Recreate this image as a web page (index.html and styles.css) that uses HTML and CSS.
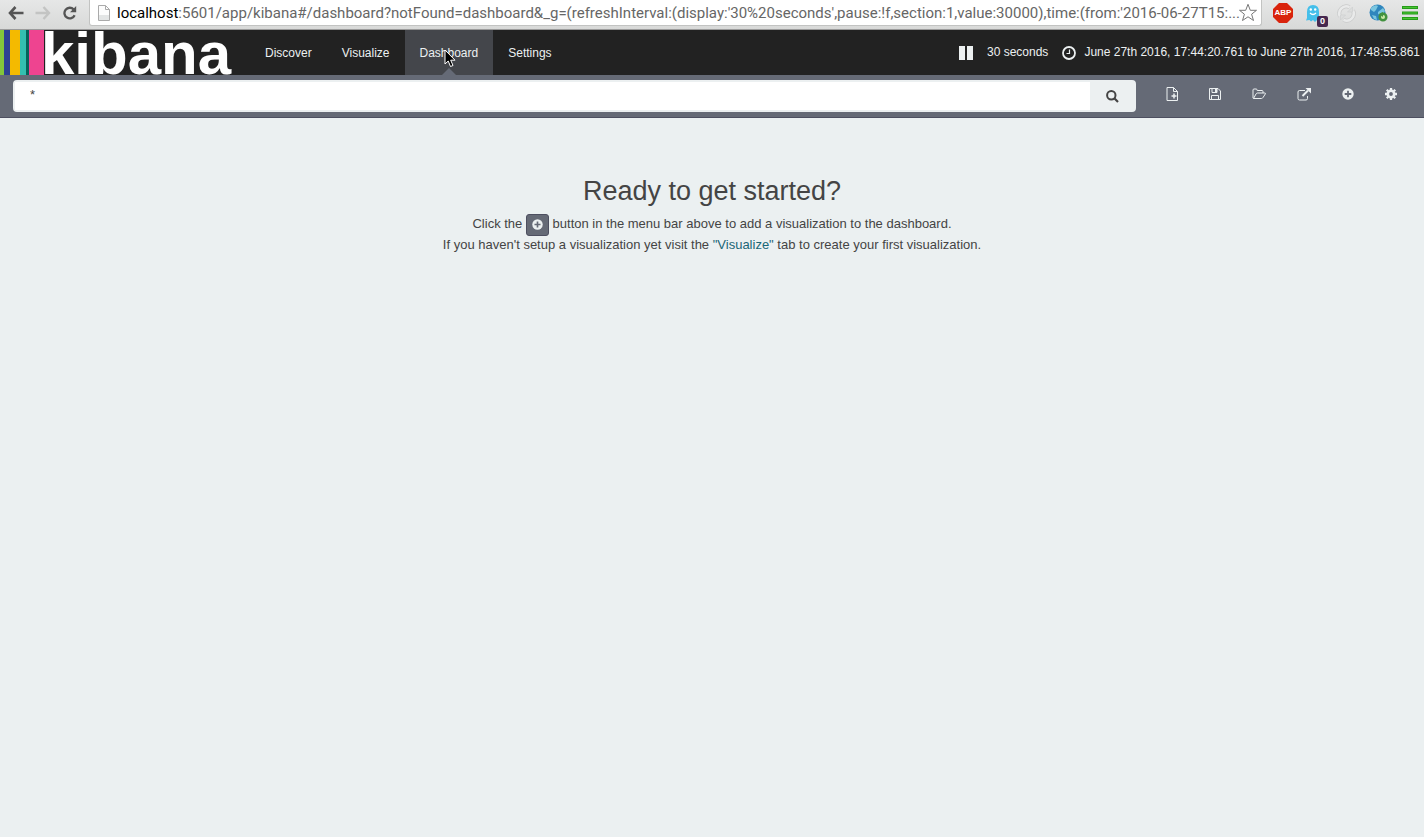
FILE: index.html
```html
<!DOCTYPE html>
<html lang="en">
<head>
<meta charset="utf-8">
<title>Kibana - Dashboard</title>
<link rel="stylesheet" href="styles.css">
</head>
<body>
<div class="browser">
  <button class="browser-btn" aria-label="Back"><svg width="16" height="14" viewBox="0 0 16 14"><path d="M7.500 1 2 7l5.500 6M2.500 7H15.500" fill="none" stroke="#555" stroke-width="2.600"/></svg></button>
  <button class="browser-btn" aria-label="Forward"><svg width="16" height="14" viewBox="0 0 16 14"><path d="M8.500 1 14 7l-5.500 6M13.500 7H.5" fill="none" stroke="#c3c4c3" stroke-width="2.400"/></svg></button>
  <button class="browser-btn" aria-label="Reload"><svg width="16" height="14" viewBox="0 0 16 14"><path d="M12.600 9.200A5.300 5.300 0 1 1 11.600 3.400" fill="none" stroke="#555" stroke-width="2.300"/><path d="M14.200 0v6.200H8z" fill="#555"/></svg></button>
  <div class="address">
    <svg width="12" height="16" viewBox="0 0 12 16"><path d="M.5.5h7l4 4v11H.5z" fill="#fcfcfc" stroke="#aaa"/><path d="M1 10h10v5H1z" fill="#e3e5e5"/><path d="M7.500.5v4h4" fill="none" stroke="#aaa"/></svg>
    <div class="url" role="textbox" aria-label="Address"><span class="host">localhost</span>:5601/app/kibana#/dashboard?notFound=dashboard&amp;_g=(refreshInterval:(display:'30%20seconds',pause:!f,section:1,value:30000),time:(from:'2016-06-27T15:...</div>
    <button class="star" aria-label="Bookmark"><svg width="20" height="19" viewBox="0 0 20 19"><path d="m10 1.300 2.300 6h6.200l-4.900 3.900 1.900 6.300L10 13.800l-5.500 3.700 1.900-6.300-4.900-3.900h6.200z" fill="#fff" stroke="#777"/></svg></button>
  </div>
  <div class="extensions">
    <button aria-label="Adblock Plus" class="abp">ABP</button>
    <button aria-label="Ghostery" class="ghost"><svg width="14" height="18" viewBox="0 0 14 18"><path d="M1 8q0-7 6-7t6 7v6l1 2.500-3-.5-2 2-2-2-2 1.500L3.500 16 0 16.500 1 14z" fill="#45bfea"/><circle cx="4.800" cy="5.500" r="1.200" fill="#fff"/><circle cx="9.200" cy="5.500" r="1.200" fill="#fff"/><path d="M4 9q3 3 6 0" fill="none" stroke="#fff" stroke-width="1.200"/></svg><span class="badge">0</span></button>
    <button aria-label="Sync"><svg width="19" height="19" viewBox="0 0 19 19" fill="none"><path d="M3 12.500A7 7 0 0 1 12.500 3.200M16 6.500A7 7 0 0 1 6.500 15.800" stroke="#c9caca" stroke-width="4"/><path d="M3 12.500A7 7 0 0 1 12.500 3.200M16 6.500A7 7 0 0 1 6.500 15.800" stroke="#e9eaea" stroke-width="2.600"/><path d="M15.500 3v5h-5zM3.500 16v-5h5z" fill="#dcdddd" stroke="#cfd0d0" stroke-width=".7"/></svg></button>
    <button aria-label="Globe"><svg width="20" height="18" viewBox="0 0 20 18"><circle cx="8.500" cy="8.500" r="8" fill="#2f86bd"/><path d="M2 4q4-4 7-2l-2 4-2 2-3-2zM9 8l5-4 2 3-3 4-4-1zM3 11l4 1 1 4-3-1z" fill="#7ac6df"/><circle cx="14" cy="13" r="3.300" fill="#c9e9a4" stroke="#43923e" stroke-width="2.500"/><path d="m10 10 4-2v5z" fill="#43923e"/></svg></button>
    <button aria-label="Menu"><svg width="16" height="14" viewBox="0 0 16 14"><path d="M0 1.500h16M0 7h16M0 12.500h16" stroke="#259c19" stroke-width="2.800"/><path d="M1 1.500h14M1 7h14M1 12.500h14" stroke="#49c332"/></svg></button>
  </div>
</div>
<header class="navbar">
  <a class="logo" href="#" aria-label="kibana"><svg width="41" height="45" viewBox="0 0 41 45"><path fill="#84c63a" d="M0 0h4v45H0z"/><path fill="#2e4192" d="M4 0h6v45H4z"/><path fill="#f4ba00" d="M10 0h10v45H10z"/><path fill="#33bfb0" d="M20 0h6v45h-6z"/><path fill="#04645a" d="M26 0h3v45h-3z"/><path fill="#ee4490" d="M29 0h15v45H29z"/></svg><span class="wordmark">kibana</span></a>
  <nav class="tabs">
    <a href="#">Discover</a>
    <a href="#">Visualize</a>
    <a href="#" class="active">Dashboard</a>
    <a href="#">Settings</a>
  </nav>
  <div class="timepicker">
    <button aria-label="Pause"><svg width="14" height="14" viewBox="0 0 14 14"><path d="M0 0h6v14H0zM8 0h6v14H8z" fill="#ecf0f1"/></svg></button>
    <button class="interval">30 seconds</button>
    <button class="range"><svg width="14" height="14" viewBox="0 0 14 14" fill="none" stroke="#ecf0f1"><circle cx="7" cy="7" r="6" stroke-width="1.800"/><path d="M7.500 3.500v4h-3" stroke-width="1.200"/></svg><span>June 27th 2016, 17:44:20.761 to June 27th 2016, 17:48:55.861</span></button>
  </div>
</header>
<div class="toolbar">
  <form class="search">
    <input type="text" value="*" aria-label="Search query">
    <button type="button" aria-label="Search"><svg width="13" height="13" viewBox="0 0 13 13"><circle cx="5.300" cy="5.300" r="4.200" fill="none" stroke="#444" stroke-width="2"/><path d="m8.300 8.300 3.700 3.700" stroke="#444" stroke-width="2.200"/></svg></button>
  </form>
  <div class="actions">
    <button aria-label="New dashboard"><svg width="12" height="14" viewBox="0 0 12 14" fill="none" stroke="#ecf0f1"><path d="M1 .5h6.500l4 4v9H1zM7.500.5v4h4"/><path d="M8 6.500v5M5.500 9h5" stroke-width="1.500"/></svg></button>
    <button aria-label="Save dashboard"><svg width="12" height="12" viewBox="0 0 12 12" fill="none" stroke="#ecf0f1"><path d="M.5.5H9L11.500 3v8.500H.5zM2.500 11.500v-4h7v4"/><path d="M3 .5v4h5v-4"/><path d="M6 1h2v3H6z" fill="#ecf0f1" stroke="none"/></svg></button>
    <button aria-label="Load dashboard"><svg width="14" height="12" viewBox="0 0 14 12" fill="none" stroke="#ecf0f1"><path d="M1 9V2q0-1 1-1h2.200q1 0 1 1.500H10q1 0 1 1V5M1.500 10.500 4 6q.6-1 1.500-1h7.300q1 0 .5 1L11 9.500q-.6 1-1.500 1h-8q-.8 0-.5-1.500"/></svg></button>
    <button aria-label="Share dashboard"><svg width="14" height="13" viewBox="0 0 14 13" fill="none" stroke="#ecf0f1"><path d="M8 2.500H2.500q-1.500 0-1.500 1.500v6.500Q1 12 2.500 12H9q1.500 0 1.500-1.500V8"/><path d="m5.500 8 5.500-5.500" stroke-width="2"/><path d="M8.500 0H14v5.500z" fill="#ecf0f1" stroke="none"/></svg></button>
    <button aria-label="Add visualization"><svg width="12" height="12" viewBox="0 0 12 12"><circle cx="6" cy="6" r="5.700" fill="#ecf0f1"/><path d="M6 2.700v6.600M2.700 6h6.600" stroke="#656a76" stroke-width="1.800"/></svg></button>
    <button aria-label="Options"><svg width="12" height="12" viewBox="0 0 12 12" fill="none" stroke="#ecf0f1"><circle cx="6" cy="6" r="3.200" stroke-width="2.600"/><path d="M6 0v2M6 10v2M0 6h2M10 6h2M1.800 1.800l1.400 1.400M8.800 8.800l1.400 1.400M1.800 10.200l1.400-1.400M8.800 3.200l1.400-1.400" stroke-width="2.300"/></svg></button>
  </div>
</div>
<main class="start">
  <h1>Ready to get started?</h1>
  <p>Click the <button class="mini" aria-label="Add visualization"><svg width="11" height="11" viewBox="0 0 12 12"><circle cx="6" cy="6" r="5.700" fill="#ecf0f1"/><path d="M6 2.700v6.600M2.700 6h6.600" stroke="#656a76" stroke-width="1.800"/></svg></button> button in the menu bar above to add a visualization to the dashboard.</p>
  <p>If you haven't setup a visualization yet visit the <a href="#">"Visualize"</a> tab to create your first visualization.</p>
</main>
<svg class="cursor" width="12" height="19" viewBox="0 0 12 19"><path d="M1 1v14l3.200-3 2.300 5.500 2.500-1-2.300-5.300H11z" fill="#000" stroke="#fff"/></svg>
</body>
</html>
```
FILE: styles.css
```css
* { box-sizing: border-box; }
body {
  margin: 0;
  min-height: 100vh;
  background: #ebf0f1;
  color: #444;
  font: 13px/21px "Liberation Sans", Arial, sans-serif;
}
button {
  border: 0;
  padding: 0;
  background: none;
  color: inherit;
  font: inherit;
}
svg { display: block; flex: none; }
a { color: #1b6676; text-decoration: none; }

.browser {
  display: flex;
  height: 30px;
  padding: 0 6px 3px 8px;
  align-items: center;
  gap: 11px;
  background: linear-gradient(#e6e7e7, #d8d9d8);
  border-bottom: 1px solid #9b9b9b;
}
.address {
  display: flex;
  flex: 1;
  min-width: 0;
  height: 26px;
  align-items: center;
  gap: 7px;
  padding: 0 3px 0 8px;
  background: #fff;
  border: 1px solid #c2c3c2;
  border-top: 0;
  border-radius: 0 0 3px 3px;
}
.url {
  flex: 1;
  min-width: 0;
  white-space: nowrap;
  font: 15px/20px Roboto, sans-serif;
  color: #666;
}
.host { color: #000; }
.extensions { display: flex; align-items: center; gap: 13px; }
.abp {
  width: 20px;
  height: 20px;
  color: #fff;
  background: #d9230c;
  clip-path: polygon(30% 0, 70% 0, 100% 30%, 100% 70%, 70% 100%, 30% 100%, 0 70%, 0 30%);
  font: bold 8px/20px "Liberation Sans", Arial, sans-serif;
}
.ghost { position: relative; width: 18px; }
.badge {
  position: absolute;
  right: -4px;
  bottom: -5px;
  width: 11px;
  height: 11px;
  background: #46284f;
  border-radius: 2px;
  color: #fff;
  font: bold 9px/11px "Liberation Sans", Arial, sans-serif;
}

.navbar {
  display: flex;
  height: 45px;
  background: #222;
  color: #ecf0f1;
  font-size: 12px;
}
.logo { display: flex; width: 250px; }
.logo svg { overflow: visible; }
.wordmark {
  color: #fff;
  font: bold 60px/48px "Liberation Sans", Arial, sans-serif;
}
.tabs { display: flex; flex: 1; }
.tabs a { padding: 0 15px; color: #ecf0f1; line-height: 46px; }
.tabs .active { position: relative; background: #44464b; }
.active::after {
  content: "";
  position: absolute;
  left: 50%;
  bottom: 0;
  margin-left: -7px;
  border: 7px solid transparent;
  border-top: 0;
  border-bottom-color: #656a76;
}
.timepicker { display: flex; align-items: center; gap: 14px; padding-right: 4px; }
.range { display: flex; align-items: center; gap: 8px; }

.toolbar {
  display: flex;
  padding: 5px 27px 5px 13px;
  gap: 30px;
  background: #656a76;
  border-bottom: 1px solid #4d4f60;
}
.search {
  display: flex;
  flex: 1;
  height: 32px;
  border: 2px solid #ecf0f1;
  border-radius: 4px;
  background: #ecf0f1;
}
.search input {
  flex: 1;
  min-width: 0;
  padding: 0 15px 4px;
  border: 0;
  background: #fff;
  color: #444;
  font: 13px "Liberation Sans", Arial, sans-serif;
}
.search button { display: flex; width: 44px; align-items: center; justify-content: center; }
.actions { display: flex; height: 28px; align-items: center; gap: 31px; }

.start { padding: 57px 0; text-align: center; }
.start h1 { margin: 0 0 6px; font-size: 27px; font-weight: 400; line-height: 32px; }
.start p { margin: 0; }
.mini {
  display: inline-flex;
  width: 23px;
  height: 22px;
  margin: -2px 0;
  align-items: center;
  justify-content: center;
  vertical-align: middle;
  background: #656a76;
  border: 1px solid #4d4f60;
  border-radius: 3px;
}
.cursor { position: absolute; left: 444px; top: 49px; }
```
